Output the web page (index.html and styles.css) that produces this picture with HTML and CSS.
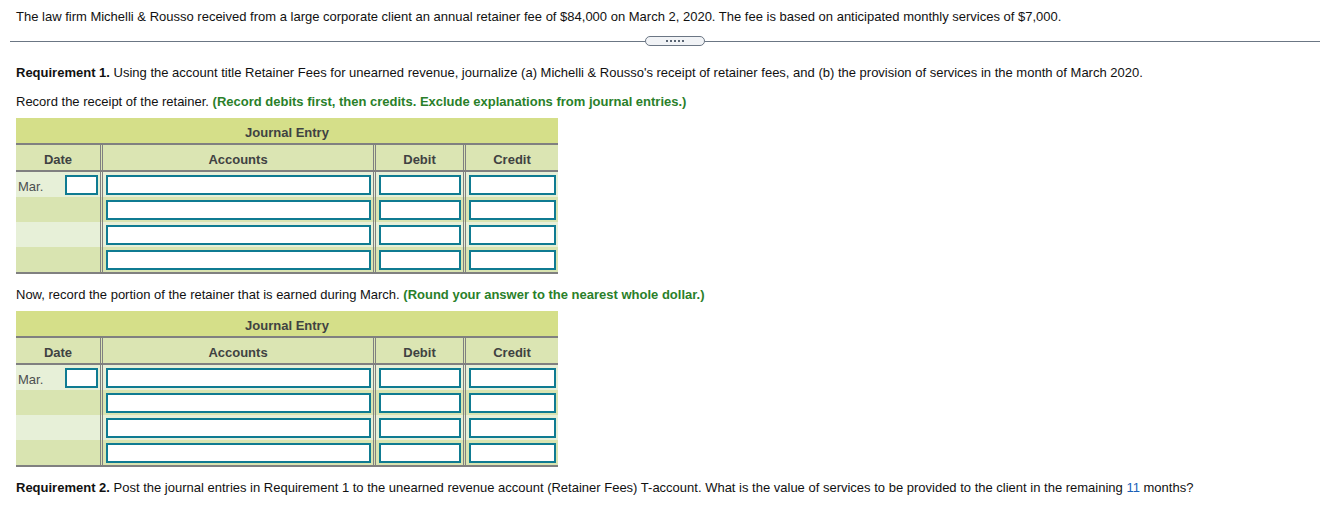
FILE: index.html
```html
<!DOCTYPE html>
<html>
<head>
<meta charset="utf-8">
<link rel="stylesheet" href="styles.css">
</head>
<body>
<p class="intro">The law firm Michelli &amp; Rousso received from a large corporate client an annual retainer fee of $84,000 on March 2, 2020. The fee is based on anticipated monthly services of $7,000.</p>
<div class="divider">
  <span class="rule rule-left"></span>
  <span class="pill"><span class="dot"></span><span class="dot"></span><span class="dot"></span><span class="dot"></span><span class="dot"></span></span>
  <span class="rule rule-right"></span>
</div>
<div class="content">
  <p class="req1"><b>Requirement 1.</b> Using the account title Retainer Fees for unearned revenue, journalize (a) Michelli &amp; Rousso's receipt of retainer fees, and (b) the provision of services in the month of March 2020.</p>
  <p class="instr">Record the receipt of the retainer. <span class="hint">(Record debits first, then credits. Exclude explanations from journal entries.)</span></p>
  <div class="journal first">
    <div class="j-title">Journal Entry</div>
    <div class="j-row j-head">
      <div class="cell c-date">Date</div>
      <div class="cell c-acct">Accounts</div>
      <div class="cell c-debit">Debit</div>
      <div class="cell c-credit">Credit</div>
    </div>
    <div class="j-row light">
      <div class="cell c-date date-cell"><span class="mar">Mar.</span><span class="box box-date"></span></div>
      <div class="cell c-acct"><span class="box"></span></div>
      <div class="cell c-debit"><span class="box"></span></div>
      <div class="cell c-credit"><span class="box"></span></div>
    </div>
    <div class="j-row dark">
      <div class="cell c-date"></div>
      <div class="cell c-acct"><span class="box"></span></div>
      <div class="cell c-debit"><span class="box"></span></div>
      <div class="cell c-credit"><span class="box"></span></div>
    </div>
    <div class="j-row light">
      <div class="cell c-date"></div>
      <div class="cell c-acct"><span class="box"></span></div>
      <div class="cell c-debit"><span class="box"></span></div>
      <div class="cell c-credit"><span class="box"></span></div>
    </div>
    <div class="j-row dark last">
      <div class="cell c-date"></div>
      <div class="cell c-acct"><span class="box"></span></div>
      <div class="cell c-debit"><span class="box"></span></div>
      <div class="cell c-credit"><span class="box"></span></div>
    </div>
  </div>

  <p class="instr2">Now, record the portion of the retainer that is earned during March. <span class="hint">(Round your answer to the nearest whole dollar.)</span></p>
  <div class="journal second">
    <div class="j-title">Journal Entry</div>
    <div class="j-row j-head">
      <div class="cell c-date">Date</div>
      <div class="cell c-acct">Accounts</div>
      <div class="cell c-debit">Debit</div>
      <div class="cell c-credit">Credit</div>
    </div>
    <div class="j-row light">
      <div class="cell c-date date-cell"><span class="mar">Mar.</span><span class="box box-date"></span></div>
      <div class="cell c-acct"><span class="box"></span></div>
      <div class="cell c-debit"><span class="box"></span></div>
      <div class="cell c-credit"><span class="box"></span></div>
    </div>
    <div class="j-row dark">
      <div class="cell c-date"></div>
      <div class="cell c-acct"><span class="box"></span></div>
      <div class="cell c-debit"><span class="box"></span></div>
      <div class="cell c-credit"><span class="box"></span></div>
    </div>
    <div class="j-row light">
      <div class="cell c-date"></div>
      <div class="cell c-acct"><span class="box"></span></div>
      <div class="cell c-debit"><span class="box"></span></div>
      <div class="cell c-credit"><span class="box"></span></div>
    </div>
    <div class="j-row dark last">
      <div class="cell c-date"></div>
      <div class="cell c-acct"><span class="box"></span></div>
      <div class="cell c-debit"><span class="box"></span></div>
      <div class="cell c-credit"><span class="box"></span></div>
    </div>
  </div>

  <p class="req2"><b>Requirement 2.</b> Post the journal entries in Requirement 1 to the unearned revenue account (Retainer Fees) T-account. What is the value of services to be provided to the client in the remaining <span class="num">11</span> months?</p>
</div>
</body>
</html>
```

FILE: styles.css
```css
* { box-sizing: border-box; }

body {
  margin: 0;
  font-family: "Liberation Sans", Arial, sans-serif;
  font-size: 13px;
  color: #111;
  background: #fff;
}

p { margin: 0; line-height: 14px; }

.intro {
  padding: 10px 16px 0 16px;
}

.divider {
  display: flex;
  align-items: center;
  height: 10px;
  margin-top: 12px;
}

.rule {
  height: 1px;
  background: #6b7684;
}
.rule-left { margin-left: 10px; width: 635px; }
.rule-right { flex: 1; }

.pill {
  width: 60px;
  height: 10px;
  border: 1px solid #6b7684;
  border-radius: 5px;
  background: #f1f3f6;
  display: flex;
  align-items: center;
  justify-content: center;
  gap: 2px;
}
.dot {
  width: 2px;
  height: 2px;
  background: #5a6573;
}

.content {
  padding: 0 16px;
}

.req1 { margin-top: 20px; }
.instr { margin-top: 15px; }
.hint { color: #2a7f2a; font-weight: bold; }

.journal {
  width: 542px;
  color: #3f4242;
}
.journal.first { margin-top: 9px; }
.journal.second { margin-top: 9px; }

.j-title {
  background: #d5df89;
  text-align: center;
  font-weight: bold;
  font-size: 13px;
  line-height: 25px;
  padding-top: 2px;
  border-bottom: 2px solid #808080;
  height: 27px;
}

.j-row {
  display: grid;
  grid-template-columns: 87px 273px 90px 92px;
  height: 25px;
}
.j-row.j-head {
  background: #dbe5b3;
  border-bottom: 2px solid #808080;
  height: 27px;
  font-weight: bold;
  font-size: 13px;
}
.j-row.last {
  border-bottom: 2px solid #808080;
  height: 27px;
}
.light { background: #e7f0d8; }
.dark { background: #d9e4b1; }

.cell {
  border-right: 3px double #808080;
  padding: 3px 2px 2px 3px;
  display: flex;
}
.c-credit { border-right: none; }

.j-head .cell {
  justify-content: center;
  align-items: center;
  padding: 3px 0 0 0;
}

.date-cell {
  justify-content: space-between;
  padding-left: 2px;
}
.mar {
  line-height: 24px;
  color: #4b4f50;
}

.box {
  flex: 1;
  height: 20px;
  border: 2px solid #0f7b92;
  background: #fff;
}
.box.box-date { flex: 0 0 33px; }

.instr2 { margin-top: 14px; }

.req2 { margin-top: 14px; }
.num { color: #1a5fb8; }
```
